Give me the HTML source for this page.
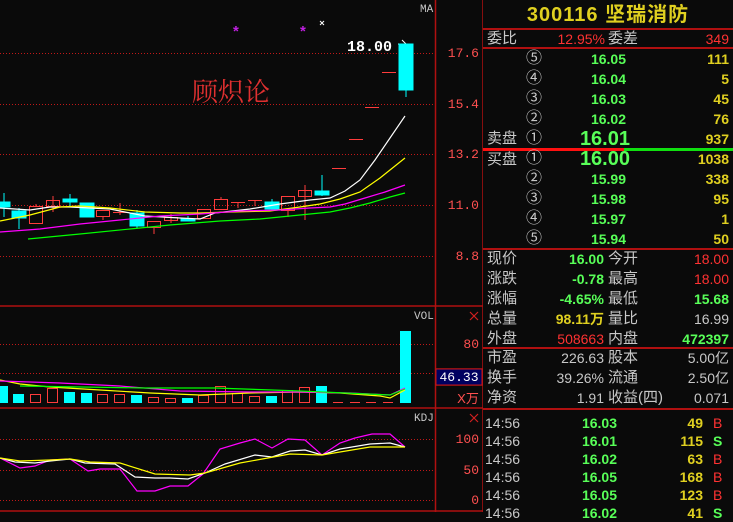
<!DOCTYPE html>
<html><head><meta charset="utf-8"><style>
*{margin:0;padding:0;box-sizing:border-box}
body{width:733px;height:512px;background:#0a0a0a;overflow:hidden;position:relative;font-family:"Liberation Sans","Noto Sans CJK SC",sans-serif;font-size:14px}
.t{position:absolute;white-space:nowrap;line-height:18px}
.g{color:#c8c8c8}.gr{color:#58ff58;font-weight:600}.y{color:#e0d020;font-weight:600}.r{color:#ff3232}.w{color:#e8e8e8}
.c{font-size:16px;line-height:18px}
.R{text-align:right}
.hl{position:absolute;left:483px;width:250px;height:2px;background:#b01010}
</style></head><body>
<svg width="483" height="512" style="position:absolute;left:0;top:0" xmlns="http://www.w3.org/2000/svg">
<g stroke="#c01818" stroke-dasharray="1,2" stroke-width="1">
<line x1="0" y1="53.5" x2="435" y2="53.5"/><line x1="0" y1="104.5" x2="435" y2="104.5"/><line x1="0" y1="154.5" x2="435" y2="154.5"/><line x1="0" y1="205.5" x2="435" y2="205.5"/><line x1="0" y1="256.5" x2="435" y2="256.5"/>
<line x1="0" y1="344.5" x2="435" y2="344.5"/><line x1="0" y1="373.5" x2="435" y2="373.5"/>
<line x1="0" y1="439.5" x2="435" y2="439.5"/><line x1="0" y1="470.5" x2="435" y2="470.5"/><line x1="0" y1="500.5" x2="435" y2="500.5"/>
</g>
<g stroke="#b01010" stroke-width="1.5">
<line x1="435.5" y1="0" x2="435.5" y2="512"/><line x1="483" y1="0" x2="483" y2="512"/>
<line x1="0" y1="306" x2="483" y2="306"/><line x1="0" y1="408" x2="483" y2="408"/><line x1="0" y1="511" x2="483" y2="511"/>
<line x1="435" y1="369" x2="483" y2="369"/><line x1="435" y1="385" x2="483" y2="385"/>
</g>
<rect x="436" y="369" width="46" height="16" fill="#000060" stroke="#c01818"/>
<text x="459" y="381" fill="#fff" font-size="13" text-anchor="middle" font-family="Liberation Mono">46.33</text>
<g fill="#ff5050" font-size="13" font-family="Liberation Mono" text-anchor="end">
<text x="479" y="57">17.6</text><text x="479" y="108">15.4</text><text x="479" y="158">13.2</text><text x="479" y="209">11.0</text><text x="479" y="260">8.8</text>
<text x="479" y="348">80</text><text x="479" y="443">100</text><text x="479" y="474">50</text><text x="479" y="504">0</text>
<text x="468" y="403" text-anchor="middle" font-family="Liberation Sans,Noto Sans CJK SC">X万</text>
</g>
<g stroke="#d02020" stroke-width="1.2"><path d="M470 312l8 8M478 312l-8 8M470 414l8 8M478 414l-8 8"/></g>
<g fill="#c8c8c8" font-size="11" font-family="Liberation Mono">
<text x="420" y="12">MA</text><text x="414" y="319">VOL</text><text x="414" y="421">KDJ</text></g>
<text x="192" y="101" fill="#e03030" font-size="26" font-family="Noto Serif CJK SC,serif">顾炽论</text>
<text x="347" y="51" fill="#fff" font-size="15" font-weight="bold" font-family="Liberation Mono">18.00</text>
<path d="M398 44h7M402 40l4 4-4 4" stroke="#fff" fill="none"/>
<g fill="#c020e0" font-size="15" font-weight="bold"><text x="233" y="36">*</text><text x="300" y="36">*</text></g>
<path d="M320 21l4 4M324 21l-4 4" stroke="#fff"/>
<g stroke="#00ffff" fill="#00ffff" stroke-width="1">
<line x1="4" y1="193" x2="4" y2="217"/><rect x="0" y="202" width="10" height="5"/>
<line x1="19" y1="208" x2="19" y2="229"/><rect x="12" y="211" width="14" height="7"/>
<line x1="70" y1="194" x2="70" y2="206"/><rect x="63" y="199" width="14" height="3"/>
<rect x="80" y="203" width="14" height="14"/>
<line x1="137" y1="210" x2="137" y2="228"/><rect x="130" y="213" width="14" height="13"/>
<line x1="188" y1="216" x2="188" y2="221"/><rect x="181" y="219" width="14" height="2"/>
<line x1="272" y1="199" x2="272" y2="210"/><rect x="265" y="202" width="14" height="7"/>
<line x1="322" y1="175" x2="322" y2="196"/><rect x="315" y="191" width="14" height="4"/>
<line x1="406" y1="90" x2="406" y2="97"/><rect x="399" y="44" width="14" height="46"/>
</g>
<g stroke="#ff3c3c" fill="none" stroke-width="1">
<rect x="29.5" y="206.5" width="13" height="17"/><line x1="36" y1="204" x2="36" y2="206"/>
<rect x="46.5" y="200.5" width="13" height="6"/><line x1="53" y1="196" x2="53" y2="212"/>
<rect x="96.5" y="210.5" width="13" height="6"/><line x1="103" y1="216" x2="103" y2="220"/>
<line x1="113" y1="212.5" x2="127" y2="212.5"/><line x1="120" y1="203" x2="120" y2="215"/>
<rect x="147.5" y="221.5" width="13" height="6"/><line x1="154" y1="227" x2="154" y2="234"/>
<rect x="164.5" y="217.5" width="13" height="3"/><line x1="171" y1="214" x2="171" y2="223"/>
<rect x="197.5" y="209.5" width="13" height="9"/>
<rect x="214.5" y="199.5" width="13" height="10"/><line x1="221" y1="197" x2="221" y2="199"/>
<line x1="231" y1="202.5" x2="245" y2="202.5"/><line x1="238" y1="202" x2="238" y2="208"/>
<line x1="248" y1="200.5" x2="262" y2="200.5"/><line x1="255" y1="200" x2="255" y2="206"/>
<rect x="281.5" y="196.5" width="13" height="14"/><line x1="288" y1="211" x2="288" y2="217"/>
<rect x="298.5" y="190.5" width="13" height="6"/><line x1="305" y1="185" x2="305" y2="220"/>
<line x1="332" y1="168.5" x2="346" y2="168.5"/><line x1="349" y1="139.5" x2="363" y2="139.5"/>
<line x1="365" y1="107.5" x2="379" y2="107.5"/><line x1="382" y1="72.5" x2="396" y2="72.5"/>
</g>
<g fill="none" stroke-width="1.2">
<polyline stroke="#fff" points="0,208 30,210 50,207 70,207 110,209 145,216 180,218 200,219 215,213 250,209 280,204 310,200 330,198 345,191 360,180 375,160 390,138 405,116"/>
<polyline stroke="#ffff00" points="0,221 30,215 60,207 80,206 110,208 145,212 180,213 200,213 230,212 270,211 300,207 320,204 340,199 360,192 380,178 405,158"/>
<polyline stroke="#ff00ff" points="0,232 40,229 80,224 120,220 160,216 200,214 240,211 280,210 310,208 330,207 345,204 365,198 385,192 405,185"/>
<polyline stroke="#00ff00" points="28,239 80,234 130,229 170,225 220,221 260,219 300,215 330,212 350,208 370,203 390,197 405,193"/>
</g>
<g fill="#00ffff">
<rect x="0" y="386" width="8" height="17"/><rect x="13" y="394" width="11" height="9"/><rect x="64" y="392" width="11" height="11"/><rect x="81" y="393" width="11" height="10"/><rect x="131" y="395" width="11" height="8"/><rect x="182" y="398" width="11" height="5"/><rect x="266" y="396" width="11" height="7"/><rect x="316" y="386" width="11" height="17"/><rect x="400" y="331" width="11" height="72"/>
</g>
<g stroke="#ff3c3c" fill="none">
<rect x="30.5" y="394.5" width="10" height="8"/><rect x="47.5" y="388.5" width="10" height="14"/><rect x="97.5" y="394.5" width="10" height="8"/><rect x="114.5" y="394.5" width="10" height="8"/><rect x="148.5" y="397.5" width="10" height="5"/><rect x="165.5" y="398.5" width="10" height="4"/><rect x="198.5" y="395.5" width="10" height="7"/><rect x="215.5" y="386.5" width="10" height="16"/><rect x="232.5" y="393.5" width="10" height="9"/><rect x="249.5" y="396.5" width="10" height="6"/><rect x="282.5" y="390.5" width="10" height="12"/><rect x="299.5" y="387.5" width="10" height="15"/>
<path d="M333 402.5h10M350 402.5h10M366 402.5h10M383 402.5h10"/>
</g>
<g fill="none" stroke-width="1.2">
<polyline stroke="#ffff00" points="0,380 20,384 50,387 100,390 150,393 200,395 250,393 300,392 340,393 380,396 390,398 405,390"/>
<polyline stroke="#ff00ff" points="0,381 60,383 120,386 180,391 250,392 300,392 350,393 390,395 405,388"/>
<polyline stroke="#00ff00" points="20,386 145,388 215,388 300,391 390,395 405,389"/>
</g>
<g fill="none" stroke-width="1.2">
<polyline stroke="#ff00ff" points="0,458 20,468 35,466 50,460 70,459 88,471 100,469 120,469 137,491 155,491 170,486 188,486 203,474 220,449 240,443 255,439 272,448 288,439 305,440 322,455 340,443 355,438 372,434 390,434 405,447"/>
<polyline stroke="#fff" points="0,458 15,462 35,463 50,461 70,459 85,463 115,464 135,477 155,478 170,478 188,479 205,473 225,464 255,455 272,457 290,451 305,450 322,455 340,449 370,444 390,443 405,447"/>
<polyline stroke="#ffff00" points="0,458 20,461 50,460 70,459 90,462 120,463 155,474 190,475 205,473 240,463 290,454 322,455 370,447 405,447"/>
</g>
</svg>

<div class="t y" style="left:483px;width:250px;top:3px;text-align:center;font-size:20px;font-weight:bold;line-height:24px;letter-spacing:1px">300116 坚瑞消防</div>
<div class="hl" style="top:28px"></div>
<div class="t g" style="left:487px;top:30px;font-size:15px">委比</div>
<div class="t r R" style="left:540px;width:65px;top:30px">12.95%</div>
<div class="t g" style="left:608px;top:30px;font-size:15px">委差</div>
<div class="t r R" style="left:650px;width:79px;top:30px">349</div>
<div class="hl" style="top:47px"></div>

<div class="t g c" style="left:526px;top:50px">⑤</div><div class="t gr R" style="left:570px;width:56px;top:50px">16.05</div><div class="t y R" style="left:660px;width:69px;top:50px">111</div>
<div class="t g c" style="left:526px;top:70px">④</div><div class="t gr R" style="left:570px;width:56px;top:70px">16.04</div><div class="t y R" style="left:660px;width:69px;top:70px">5</div>
<div class="t g c" style="left:526px;top:90px">③</div><div class="t gr R" style="left:570px;width:56px;top:90px">16.03</div><div class="t y R" style="left:660px;width:69px;top:90px">45</div>
<div class="t g c" style="left:526px;top:110px">②</div><div class="t gr R" style="left:570px;width:56px;top:110px">16.02</div><div class="t y R" style="left:660px;width:69px;top:110px">76</div>
<div class="t g" style="left:487px;top:130px;font-size:15px">卖盘</div><div class="t g c" style="left:526px;top:130px">①</div><div class="t gr R" style="left:560px;width:70px;top:128px;font-size:20px;font-weight:bold;line-height:22px">16.01</div><div class="t y R" style="left:660px;width:69px;top:130px">937</div>
<div style="position:absolute;left:483px;top:148px;width:141px;height:3px;background:#ff1010"></div>
<div style="position:absolute;left:624px;top:148px;width:109px;height:3px;background:#10e010"></div>
<div class="t g" style="left:487px;top:151px;font-size:15px">买盘</div><div class="t g c" style="left:526px;top:150px">①</div><div class="t gr R" style="left:560px;width:70px;top:148px;font-size:20px;font-weight:bold;line-height:22px">16.00</div><div class="t y R" style="left:660px;width:69px;top:150px">1038</div>
<div class="t g c" style="left:526px;top:170px">②</div><div class="t gr R" style="left:570px;width:56px;top:170px">15.99</div><div class="t y R" style="left:660px;width:69px;top:170px">338</div>
<div class="t g c" style="left:526px;top:190px">③</div><div class="t gr R" style="left:570px;width:56px;top:190px">15.98</div><div class="t y R" style="left:660px;width:69px;top:190px">95</div>
<div class="t g c" style="left:526px;top:210px">④</div><div class="t gr R" style="left:570px;width:56px;top:210px">15.97</div><div class="t y R" style="left:660px;width:69px;top:210px">1</div>
<div class="t g c" style="left:526px;top:230px">⑤</div><div class="t gr R" style="left:570px;width:56px;top:230px">15.94</div><div class="t y R" style="left:660px;width:69px;top:230px">50</div>
<div class="hl" style="top:248px"></div>

<div class="t g" style="left:487px;top:250px;font-size:15px">现价</div><div class="t gr R" style="left:540px;width:64px;top:250px">16.00</div><div class="t g" style="left:608px;top:250px;font-size:15px">今开</div><div class="t r R" style="left:650px;width:79px;top:250px">18.00</div>
<div class="t g" style="left:487px;top:270px;font-size:15px">涨跌</div><div class="t gr R" style="left:540px;width:64px;top:270px">-0.78</div><div class="t g" style="left:608px;top:270px;font-size:15px">最高</div><div class="t r R" style="left:650px;width:79px;top:270px">18.00</div>
<div class="t g" style="left:487px;top:290px;font-size:15px">涨幅</div><div class="t gr R" style="left:530px;width:74px;top:290px">-4.65%</div><div class="t g" style="left:608px;top:290px;font-size:15px">最低</div><div class="t gr R" style="left:650px;width:79px;top:290px">15.68</div>
<div class="t g" style="left:487px;top:310px;font-size:15px">总量</div><div class="t y R" style="left:530px;width:74px;top:310px">98.11万</div><div class="t g" style="left:608px;top:310px;font-size:15px">量比</div><div class="t g R" style="left:650px;width:79px;top:310px">16.99</div>
<div class="t g" style="left:487px;top:330px;font-size:15px">外盘</div><div class="t r R" style="left:530px;width:74px;top:330px">508663</div><div class="t g" style="left:608px;top:330px;font-size:15px">内盘</div><div class="t gr R" style="left:650px;width:79px;top:330px">472397</div>
<div class="hl" style="top:347px"></div>
<div class="t g" style="left:487px;top:349px;font-size:15px">市盈</div><div class="t g R" style="left:530px;width:74px;top:349px">226.63</div><div class="t g" style="left:608px;top:349px;font-size:15px">股本</div><div class="t g R" style="left:650px;width:79px;top:349px">5.00亿</div>
<div class="t g" style="left:487px;top:369px;font-size:15px">换手</div><div class="t g R" style="left:530px;width:74px;top:369px">39.26%</div><div class="t g" style="left:608px;top:369px;font-size:15px">流通</div><div class="t g R" style="left:650px;width:79px;top:369px">2.50亿</div>
<div class="t g" style="left:487px;top:389px;font-size:15px">净资</div><div class="t g R" style="left:530px;width:74px;top:389px">1.91</div><div class="t g" style="left:608px;top:389px;font-size:15px">收益(四)</div><div class="t g R" style="left:650px;width:79px;top:389px">0.071</div>
<div class="hl" style="top:408px"></div>

<div class="t g" style="left:485px;top:414px">14:56</div><div class="t gr R" style="left:560px;width:57px;top:414px">16.03</div><div class="t y R" style="left:650px;width:53px;top:414px">49</div><div class="t r" style="left:713px;top:414px">B</div>
<div class="t g" style="left:485px;top:432px">14:56</div><div class="t gr R" style="left:560px;width:57px;top:432px">16.01</div><div class="t y R" style="left:650px;width:53px;top:432px">115</div><div class="t gr" style="left:713px;top:432px">S</div>
<div class="t g" style="left:485px;top:450px">14:56</div><div class="t gr R" style="left:560px;width:57px;top:450px">16.02</div><div class="t y R" style="left:650px;width:53px;top:450px">63</div><div class="t r" style="left:713px;top:450px">B</div>
<div class="t g" style="left:485px;top:468px">14:56</div><div class="t gr R" style="left:560px;width:57px;top:468px">16.05</div><div class="t y R" style="left:650px;width:53px;top:468px">168</div><div class="t r" style="left:713px;top:468px">B</div>
<div class="t g" style="left:485px;top:486px">14:56</div><div class="t gr R" style="left:560px;width:57px;top:486px">16.05</div><div class="t y R" style="left:650px;width:53px;top:486px">123</div><div class="t r" style="left:713px;top:486px">B</div>
<div class="t g" style="left:485px;top:504px">14:56</div><div class="t gr R" style="left:560px;width:57px;top:504px">16.02</div><div class="t y R" style="left:650px;width:53px;top:504px">41</div><div class="t gr" style="left:713px;top:504px">S</div>
</body></html>
